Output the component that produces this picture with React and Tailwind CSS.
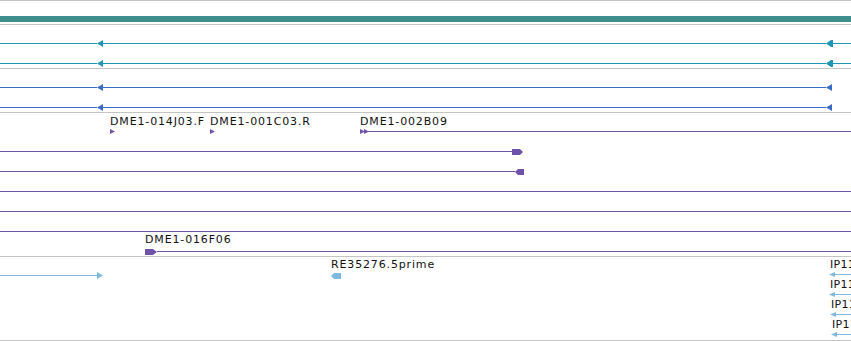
import React from 'react';

// small strand glyphs drawn on the track canvas
function Glyph({ w, h, points, className }) {
  return (
    <svg width={w} height={h} viewBox={`0 0 ${w} ${h}`} className={`shrink-0 ${className}`}>
      {points.map((p, i) => (
        <polygon key={i} points={p} />
      ))}
    </svg>
  );
}

function Sep() {
  return <div className="h-px w-full shrink-0 bg-[#c4c4c4]" />;
}

function Label({ className = 'tracking-[0.85px]', children }) {
  return (
    <span className={`shrink-0 whitespace-nowrap text-[11px] leading-[11px] text-[#111] ${className}`}>
      {children}
    </span>
  );
}

// one feature row: 7px tall, line runs through the middle
function Row({ className = '', children }) {
  return <div className={`flex h-[7px] items-center ${className}`}>{children}</div>;
}

const LEFT = ['0,3.5 6,0 6,7'];
const RIGHT = ['0,0 6,3.5 0,7'];

export default function App() {
  return (
    <div className="w-[851px] h-[341px] overflow-hidden bg-white flex flex-col font-['DejaVu_Sans',sans-serif]">
      <Sep />
      {/* sequence bar */}
      <div className="h-[23px] pt-[15px]">
        <div className="h-[6px] bg-[#3f8f8f]" />
      </div>
      <Sep />

      {/* teal transcripts */}
      <div className="h-[43px] pt-[15px] flex flex-col gap-[13px]">
        {[0, 1].map((i) => (
          <Row key={i}>
            <div className="w-[97px] h-px bg-[#1e95b4]" />
            <Glyph w={6} h={7} points={LEFT} className="fill-[#1e95b4]" />
            <div className="flex-1 h-px bg-[#1e95b4]" />
            <Glyph w={7} h={7} points={['0,3.5 5,0 7,0 7,7 5,7']} className="fill-[#1e95b4]" />
            <div className="w-[18px] h-px bg-[#1e95b4]" />
          </Row>
        ))}
      </div>
      <Sep />

      {/* blue transcripts */}
      <div className="h-[43px] pt-[15px] flex flex-col gap-[13px]">
        {[0, 1].map((i) => (
          <Row key={i}>
            <div className="w-[97px] h-px bg-[#3a6cc8]" />
            <Glyph w={6} h={7} points={LEFT} className="fill-[#3a6cc8]" />
            <div className="flex-1 h-px bg-[#3a6cc8]" />
            <Glyph w={6} h={7} points={LEFT} className="fill-[#3a6cc8]" />
            <div className="w-[19px]" />
          </Row>
        ))}
      </div>
      <Sep />

      {/* purple ESTs */}
      <div className="h-[143px] pt-[3px] flex flex-col">
        <div className="flex h-[11px] pl-[110px]">
          <Label className="w-[100px] tracking-[0.85px]">DME1-014J03.F</Label>
          <Label className="w-[150px] tracking-[0.85px]">DME1-001C03.R</Label>
          <Label>DME1-002B09</Label>
        </div>
        <Row className="mt-px pl-[110px]">
          <Glyph w={5} h={5} points={['0,0 5,2.5 0,5']} className="fill-[#7053a8]" />
          <div className="w-[95px]" />
          <Glyph w={5} h={5} points={['0,0 5,2.5 0,5']} className="fill-[#7053a8]" />
          <div className="w-[145px]" />
          <Glyph w={10} h={5} points={['0,0 5,2.5 0,5', '4,0 9,2.5 4,5', '8,2 10,2 10,3 8,3']} className="fill-[#7053a8]" />
          <div className="flex-1 h-px bg-[#7053a8]" />
        </Row>
        <div className="mt-[13px] flex flex-col gap-[13px]">
          <Row>
            <div className="w-[512px] h-px bg-[#7053a8]" />
            <Glyph w={11} h={6} points={['0,0 8,0 11,3 8,6 0,6']} className="fill-[#7053a8]" />
          </Row>
          <Row>
            <div className="w-[515px] h-px bg-[#7053a8]" />
            <Glyph w={9} h={6} points={['0,3 3,0 9,0 9,6 3,6']} className="fill-[#7053a8]" />
          </Row>
          <Row>
            <div className="flex-1 h-px bg-[#7053a8]" />
          </Row>
          <Row>
            <div className="flex-1 h-px bg-[#7053a8]" />
          </Row>
          <Row>
            <div className="flex-1 h-px bg-[#7053a8]" />
          </Row>
        </div>
        <div className="-mt-px flex h-[11px] pl-[145px]">
          <Label>DME1-016F06</Label>
        </div>
        <Row className="mt-[3px] pl-[145px]">
          <Glyph w={12} h={6} points={['0,0 8,0 12,3 8,6 0,6']} className="fill-[#7053a8]" />
          <div className="flex-1 h-px bg-[#7053a8]" />
        </Row>
      </div>
      <Sep />

      {/* light blue cDNAs */}
      <div className="h-[83px] flex">
        <div className="w-[829px] shrink-0 pt-[2px] flex flex-col">
          <div className="flex h-[11px] pl-[331px]">
            <Label>RE35276.5prime</Label>
          </div>
          <Row className="mt-[2px]">
            <div className="w-[97px] h-px bg-[#7fb9df]" />
            <Glyph w={6} h={7} points={RIGHT} className="fill-[#7fb9df]" />
            <div className="w-[228px]" />
            <Glyph w={10} h={6} points={['0,3 3,0 10,0 10,6 3,6']} className="fill-[#7fb9df]" />
          </Row>
        </div>
        <div className="flex-1 min-w-0 flex flex-col">
          {['', '', 'pl-px', 'pl-[2px]'].map((pad, i) => (
            <div key={i} className={`h-[20px] pt-[2px] flex flex-col ${pad}`}>
              <div className="flex h-[11px] pl-px">
                <Label className="tracking-[0.3px]">IP11458</Label>
              </div>
              <div className="mt-[2px] flex h-[5px] items-center">
                <Glyph w={6} h={5} points={['0,2.5 6,0 6,5']} className="fill-[#7fb9df]" />
                <div className="flex-1 h-px bg-[#7fb9df]" />
              </div>
            </div>
          ))}
        </div>
      </div>
      <Sep />
    </div>
  );
}
